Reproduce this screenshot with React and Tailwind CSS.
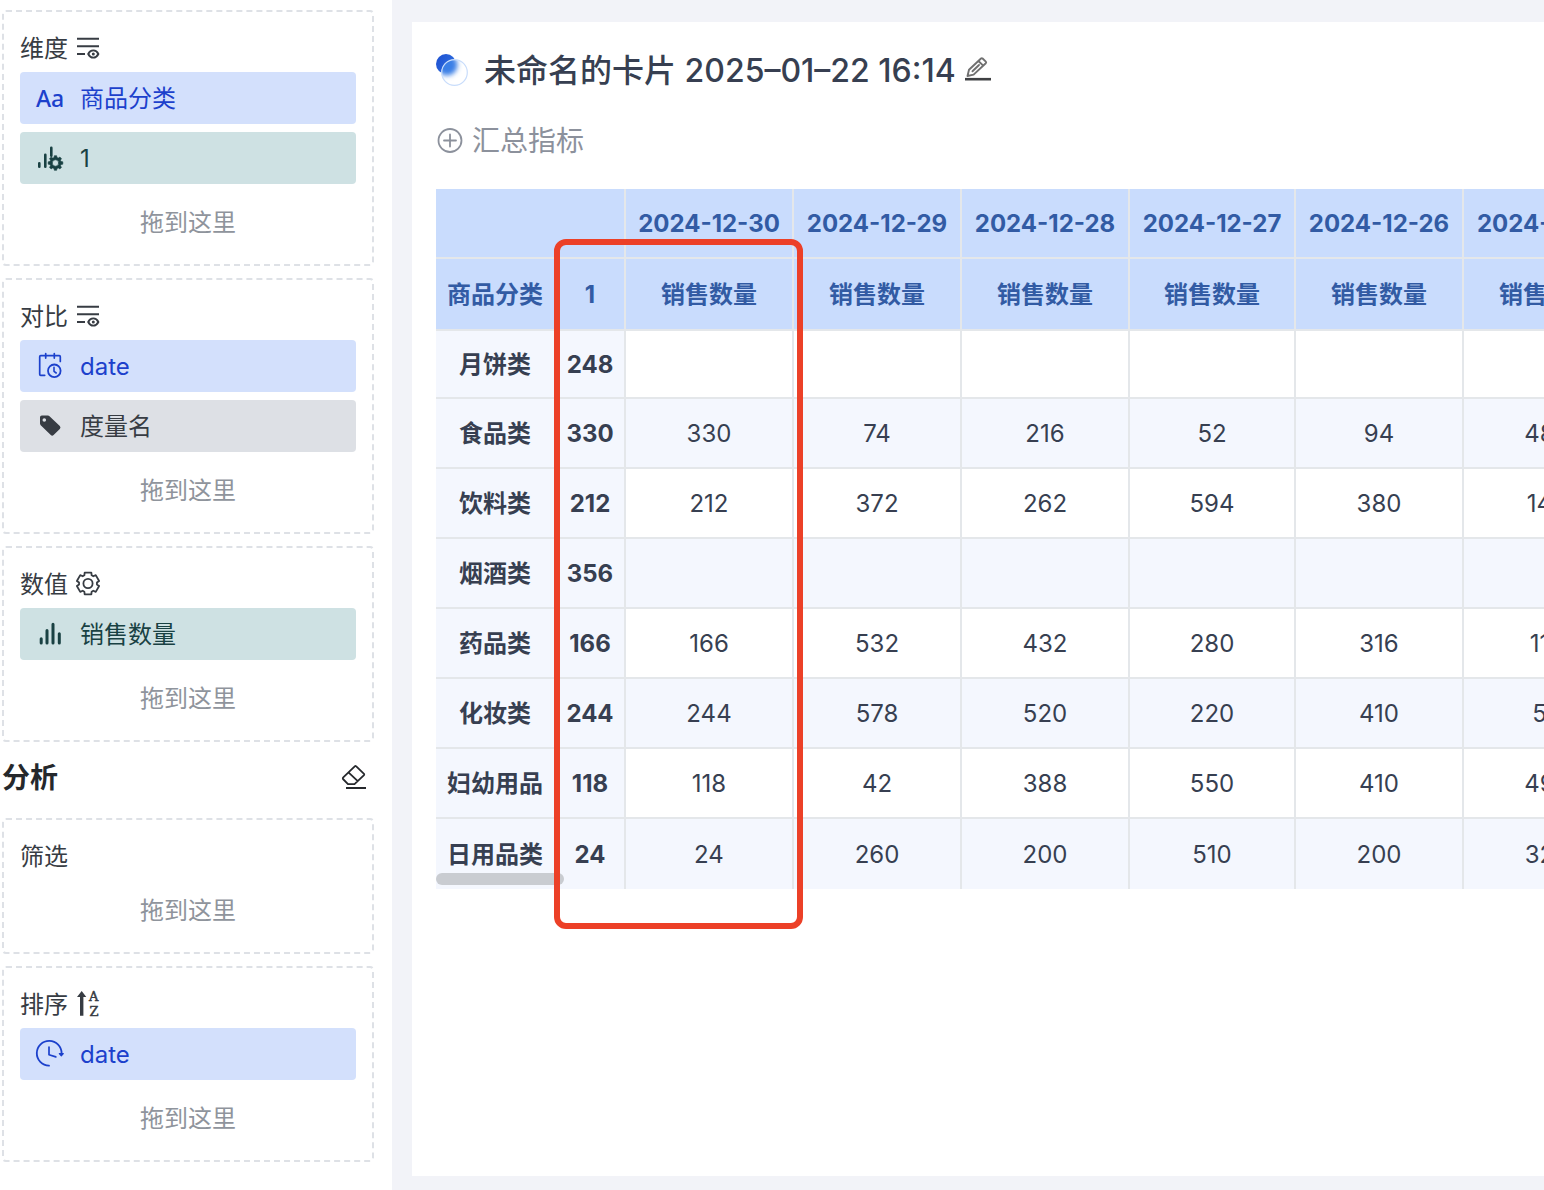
const dimensions = [
  { icon: 'text', label: '商品分类', tone: 'blue' },
  { icon: 'barsGear', label: '1', tone: 'green' },
];

const comparisons = [
  { icon: 'calendar', label: 'date', tone: 'blue' },
  { icon: 'tag', label: '度量名', tone: 'gray' },
];

const values = [{ icon: 'bars', label: '销售数量', tone: 'green' }];

const sorts = [{ icon: 'clock', label: 'date', tone: 'blue' }];

const tones = {
  blue: 'bg-[#d3e0fc] text-[#1c41cc]',
  green: 'bg-[#cee1e3] text-[#194143]',
  gray: 'bg-[#dde0e5] text-[#373c43]',
};

const dates = ['2024-12-30', '2024-12-29', '2024-12-28', '2024-12-27', '2024-12-26', '2024-12-25'];

const rows = [
  { name: '月饼类', one: 248, cells: ['', '', '', '', '', ''] },
  { name: '食品类', one: 330, cells: [330, 74, 216, 52, 94, 480] },
  { name: '饮料类', one: 212, cells: [212, 372, 262, 594, 380, 140] },
  { name: '烟酒类', one: 356, cells: ['', '', '', '', '', ''] },
  { name: '药品类', one: 166, cells: [166, 532, 432, 280, 316, 110] },
  { name: '化妆类', one: 244, cells: [244, 578, 520, 220, 410, 58] },
  { name: '妇幼用品', one: 118, cells: [118, 42, 388, 550, 410, 490] },
  { name: '日用品类', one: 24, cells: [24, 260, 200, 510, 200, 320] },
];

// Closed outline of a cog: root and tip are the half angles of a tooth in degrees
function gearPath(cx, cy, teeth, inner, outer, root, tip) {
  const points = [];
  for (let i = 0; i < teeth; i++) {
    const a = (360 / teeth) * i - 90;
    [[inner, -root], [outer, -tip], [outer, tip], [inner, root]].forEach(([r, d]) => {
      const rad = ((a + d) * Math.PI) / 180;
      points.push(`${(cx + r * Math.cos(rad)).toFixed(2)} ${(cy + r * Math.sin(rad)).toFixed(2)}`);
    });
  }
  return `M${points.join('L')}Z`;
}

function Svg({ size = 28, children }) {
  return (
    <svg
      width={size}
      height={size}
      viewBox={`0 0 ${size} ${size}`}
      fill="none"
      stroke="currentColor"
      strokeWidth="1.8"
      strokeLinecap="round"
      strokeLinejoin="round"
      className="shrink-0 overflow-visible"
      aria-hidden="true"
    >
      {children}
    </svg>
  );
}

const chipIcons = {
  text: (
    <Svg>
      <text x="0" y="23" fontSize="23" fontWeight="500" fontFamily="Noto Sans, sans-serif" fill="currentColor" stroke="none">
        Aa
      </text>
    </Svg>
  ),
  barsGear: (
    <Svg>
      <path d="M3.3 19.3v3.4M9.3 10.7v12M15.3 3.7v8" strokeWidth="2.6" />
      <path
        fillRule="evenodd"
        fill="currentColor"
        strokeWidth="0.6"
        d={`${gearPath(19.5, 19, 8, 5.7, 7.4, 15, 9)}M22.7 19a3.2 3.2 0 1 0-6.4 0a3.2 3.2 0 1 0 6.4 0Z`}
      />
    </Svg>
  ),
  calendar: (
    <Svg>
      <path d="M24.3 9.5V4.7a1 1 0 0 0-1-1H4.7a1 1 0 0 0-1 1v17.6a1 1 0 0 0 1 1h4M9.7 1.5v4.6M18.3 1.5v4.6" strokeWidth="1.7" />
      <circle cx="18.3" cy="18.8" r="6.3" />
      <path d="M18 15.3v4l2.2 1.7" strokeWidth="1.6" />
    </Svg>
  ),
  tag: (
    <Svg>
      <path
        fill="currentColor"
        stroke="none"
        fillRule="evenodd"
        d="M4 5.3a1.8 1.8 0 0 1 1.8-1.8h6.1a2.4 2.4 0 0 1 1.6.7l10.3 9.9a2 2 0 0 1 0 2.8l-6.2 6.2a2 2 0 0 1-2.8 0L4.7 13.2A2.4 2.4 0 0 1 4 11.6ZM8.3 6.2a1.8 1.8 0 1 0 0 3.6a1.8 1.8 0 1 0 0-3.6Z"
      />
    </Svg>
  ),
  bars: (
    <Svg>
      <path d="M5.2 18.8V23M11 10.5V23M17 4.2V23M23.3 13.7V23" strokeWidth="3" />
    </Svg>
  ),
  clock: (
    <Svg>
      <path d="M13 25.7A12.4 12.4 0 1 1 25.6 13.5" />
      <path d="M13 7v7.7l6.8 2.2" strokeWidth="1.7" />
      <path d="M23.3 13.6h4l-2 2.2Z" fill="currentColor" strokeWidth="1.2" />
    </Svg>
  ),
};

function FieldsIcon() {
  return (
    <Svg size={24}>
      <path d="M1 2.7h22M1 10.3h22M1 18h8" strokeWidth="2" strokeLinecap="butt" />
      <path d="M12.2 18c2.3-4.8 7.9-4.8 10.2 0c-2.3 4.8-7.9 4.8-10.2 0Z" strokeWidth="1.9" />
      <circle cx="17.3" cy="18" r="1.5" fill="currentColor" stroke="none" />
    </Svg>
  );
}

function GearIcon() {
  return (
    <Svg size={24}>
      <path d={gearPath(12, 11.5, 6, 9, 11.4, 24, 17)} strokeWidth="1.8" />
      <circle cx="12" cy="11.5" r="4.6" strokeWidth="1.8" />
    </Svg>
  );
}

function SortIcon() {
  return (
    <Svg size={26}>
      <path d="M5.7 0L10.3 6H7.4V24.7H4V6H1Z" fill="currentColor" stroke="none" />
      <g fill="currentColor" strokeWidth="0.5" fontFamily="DejaVu Serif, serif" fontSize="13">
        <text x="13" y="10">A</text>
        <text x="13.5" y="24.5">Z</text>
      </g>
    </Svg>
  );
}

function EraserIcon() {
  return (
    <Svg>
      <path d="M16 2.2L24 9.8Q24.5 10.5 24 11.1L14.5 20.1H8L3 15Q2.6 14.3 3 13.7L15 2.2Q15.5 1.7 16 2.2ZM9 8.8L17.5 16.8" />
      <path d="M6 24h20" strokeWidth="2" strokeLinecap="butt" />
    </Svg>
  );
}

function PencilIcon() {
  return (
    <Svg>
      <path
        d="M3.5 20L5 13.8L17 2.5Q17.8 1.8 18.6 2.5L21.8 5.6Q22.5 6.4 21.8 7.2L9.6 18.6ZM14.4 5L19.2 9.6M8.5 15.3L15 9"
        strokeWidth="1.9"
        stroke="#707070"
      />
      <path d="M1 23.2h26" strokeWidth="2.6" strokeLinecap="butt" stroke="#3f4043" />
    </Svg>
  );
}

function CardLogo() {
  return (
    <svg width="32" height="32" viewBox="0 0 32 32" className="shrink-0" aria-hidden="true">
      <defs>
        <linearGradient id="ball" x1="0" y1="0" x2="1" y2="0.6">
          <stop offset="0" stopColor="#1d4fd0" />
          <stop offset="1" stopColor="#2f6fe0" />
        </linearGradient>
        <clipPath id="glass">
          <circle cx="18.5" cy="18.5" r="13" />
        </clipPath>
        <filter id="soft" x="-50%" y="-50%" width="200%" height="200%">
          <feGaussianBlur stdDeviation="2.4" />
        </filter>
      </defs>
      <circle cx="10" cy="10" r="10" fill="url(#ball)" />
      <circle cx="18.5" cy="18.5" r="13" fill="#fff" />
      <g clipPath="url(#glass)">
        <circle cx="11" cy="11" r="10.5" fill="#3a7fe6" filter="url(#soft)" />
      </g>
      <circle cx="18.5" cy="18.5" r="12.8" fill="none" stroke="#c9ddfb" strokeWidth="1.2" />
    </svg>
  );
}

function DropBox({ title, icon, items = [] }) {
  return (
    <section className="rounded border-2 border-dashed border-[#dee1e6] px-4 py-3">
      <h3 className="flex h-12 items-center gap-2 text-2xl text-[#373c43]">
        <span className="pt-0.5">{title}</span>
        {icon}
      </h3>
      <div className="flex flex-col gap-2">
        {items.map((item) => (
          <button
            key={item.label}
            type="button"
            className={`flex h-13 w-full items-center gap-4 rounded px-4 text-left text-2xl ${tones[item.tone]}`}
          >
            {chipIcons[item.icon]}
            <span className="pt-0.5">{item.label}</span>
          </button>
        ))}
        <p className="flex h-15 items-center justify-center pt-0.5 text-2xl text-[#8f949c]">拖到这里</p>
      </div>
    </section>
  );
}

function PivotTable() {
  return (
    <table className="w-[1196px] table-fixed border-separate border-spacing-0 text-center text-2xl text-[#373f51]">
      <colgroup>
        <col className="w-[120px]" />
        <col className="w-[70px]" />
        <col className="w-[168px]" />
        <col className="w-[168px]" />
        <col className="w-[168px]" />
        <col className="w-[166px]" />
        <col className="w-[168px]" />
        <col className="w-[168px]" />
      </colgroup>
      <thead className="bg-[#c9dcfd] text-[#325ba4]">
        <tr className="h-[70px]">
          <td colSpan={2} className="border-r-2 border-b-2 border-[#e4e7ea]" />
          {dates.map((date) => (
            <th key={date} scope="col" className="border-r-2 border-b-2 border-[#e4e7ea] p-0 pt-0.5 font-bold whitespace-nowrap">
              {date}
            </th>
          ))}
        </tr>
        <tr className="h-[72px]">
          <th scope="col" className="border-r-2 border-b-2 border-[#e4e7ea] p-0 pt-0.5 font-bold">商品分类</th>
          <th scope="col" className="border-r-2 border-b-2 border-[#e4e7ea] p-0 pt-0.5 font-bold">1</th>
          {dates.map((date) => (
            <th key={date} scope="col" className="border-r-2 border-b-2 border-[#e4e7ea] p-0 pt-0.5 font-bold">
              销售数量
            </th>
          ))}
        </tr>
      </thead>
      <tbody>
        {rows.map((row) => (
          <tr key={row.name} className="group h-[70px] even:bg-[#f4f7fe] first:h-[68px]">
            <th scope="row" className="border-r-2 border-b-2 border-[#e4e7ea] bg-[#f4f7fe] p-0 pt-0.5 font-bold group-last:border-b-0">
              {row.name}
            </th>
            <th scope="row" className="border-r-2 border-b-2 border-[#e4e7ea] bg-[#f4f7fe] p-0 pt-0.5 font-bold group-last:border-b-0">
              {row.one}
            </th>
            {row.cells.map((cell, i) => (
              <td key={dates[i]} className="border-r-2 border-b-2 border-[#e4e7ea] p-0 pt-0.5 group-last:border-b-0">
                {cell}
              </td>
            ))}
          </tr>
        ))}
      </tbody>
    </table>
  );
}

export default function App() {
  return (
    <div className="flex min-h-screen overflow-hidden bg-[#f2f3f8] font-['Inter','Noto_Sans_CJK_SC',sans-serif]">
      {/* Field settings */}
      <aside className="flex w-[392px] shrink-0 flex-col gap-3 bg-white pt-[10px] pr-[18px] pl-[2px]">
        <DropBox title="维度" icon={<FieldsIcon />} items={dimensions} />
        <DropBox title="对比" icon={<FieldsIcon />} items={comparisons} />
        <DropBox title="数值" icon={<GearIcon />} items={values} />
        <div className="flex h-13 items-center justify-between pr-1.5 pb-1 text-[#25282c]">
          <h2 className="text-[28px] leading-10 font-semibold">分析</h2>
          <button type="button" aria-label="清空">
            <EraserIcon />
          </button>
        </div>
        <DropBox title="筛选" />
        <DropBox title="排序" icon={<SortIcon />} items={sorts} />
      </aside>

      {/* Card */}
      <main className="flex min-w-0 flex-1 pt-[22px] pb-[14px] pl-5">
        <div className="min-w-0 flex-1 bg-white pt-6 pl-6">
          <header className="flex h-12 items-center gap-4">
            <CardLogo />
            <div className="flex items-center gap-2">
              <h1 className="pt-0.5 text-[32px] leading-10 font-medium whitespace-nowrap text-[#373f51]">
                未命名的卡片 2025–01–22 16:14
              </h1>
              <button type="button" aria-label="重命名">
                <PencilIcon />
              </button>
            </div>
          </header>

          <button type="button" className="mt-6 flex h-11 items-center gap-2 text-[28px] text-[#8c919c]">
            <Svg>
              <circle cx="14" cy="14.5" r="11.5" />
              <path d="M14 8.5v12M8 14.5h12" />
            </Svg>
            <span className="pt-0.5">汇总指标</span>
          </button>

          <div className="relative mt-[27px]">
            <div className="overflow-hidden">
              <PivotTable />
            </div>
            {/* Horizontal scrollbar thumb */}
            <div className="absolute bottom-1 left-0 h-3 w-32 rounded-full bg-[#c9ccd1]" />
            {/* Highlight around the first date column */}
            <div className="absolute top-[50px] -bottom-10 left-[118px] w-[249px] rounded-xl border-6 border-[#ec4027]" />
          </div>
        </div>
      </main>
    </div>
  );
}
